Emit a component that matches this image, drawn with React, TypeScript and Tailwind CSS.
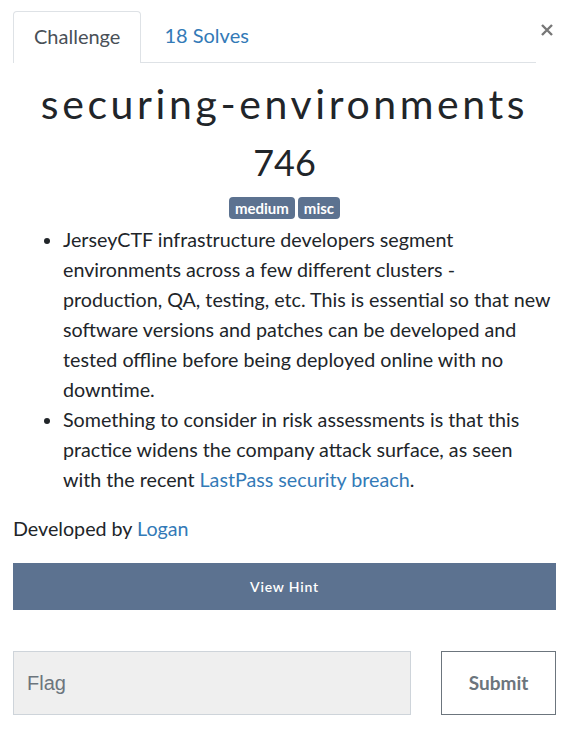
import React from "react";

export default function App() {
  return (
    <div className="w-[581px] min-h-[737px] bg-white font-['Lato',sans-serif] text-[#212529] px-[13px] pt-[11px]">
      <div className="w-[543px] flex items-start">
        <div className="flex flex-1 border-b border-[#dee2e6] h-[52px]">
          <div className="h-[52px] px-[20px] pb-[3px] flex items-center border border-b-0 border-[#dee2e6] rounded-t-[4px] bg-white text-[20px] text-[#495057] -mb-px">
            Challenge
          </div>
          <div className="h-[51px] px-[23px] pb-[3px] flex items-center text-[20px] text-[#337ab7]">
            18 Solves
          </div>
        </div>
        <button className="ml-[2px] mt-[10px] w-[18px] h-[18px] flex items-center justify-center text-[#777]">
          <svg width="14" height="14" viewBox="0 0 14 14">
            <path d="M2 2L12 12M12 2L2 12" stroke="currentColor" strokeWidth="2.4" />
          </svg>
        </button>
      </div>

      <div className="w-[543px]">
        <h2 className="mt-[17px] text-center text-[41px] leading-[48px] tracking-[3.6px] text-[#212529]">
          securing-environments
        </h2>
        <h3 className="mt-[14px] text-center text-[36px] leading-[40px] font-normal">746</h3>
        <div className="mt-[15px] flex justify-center gap-[3px]">
          <span className="px-[6px] h-[22px] flex items-center rounded-[4px] bg-[#5c7290] text-white text-[15px] font-bold">
            medium
          </span>
          <span className="px-[6px] h-[22px] flex items-center rounded-[4px] bg-[#5c7290] text-white text-[15px] font-bold">
            misc
          </span>
        </div>

        <ul className="mt-[6px] list-disc pl-[50px] pr-[4px] text-[19.7px] leading-[30px]">
          <li>
            JerseyCTF infrastructure developers segment environments across a few different clusters - production,
            QA, testing, etc. This is essential so that new software versions and patches can be developed and
            tested offline before being deployed online with no downtime.
          </li>
          <li>
            Something to consider in risk assessments is that this practice widens the company attack surface, as
            seen with the recent <a className="text-[#337ab7]">LastPass security breach</a>.
          </li>
        </ul>

        <p className="mt-[19px] text-[19.7px] leading-[30px]">
          Developed by <a className="text-[#337ab7]">Logan</a>
        </p>

        <button className="mt-[19px] w-full h-[47px] bg-[#5c7290] text-white text-[14px] tracking-[0.8px] font-semibold">
          View Hint
        </button>

        <div className="mt-[41px] flex items-center gap-[30px]">
          <div className="w-[398px] h-[64px] bg-[#efefef] border border-[#ced4da] flex items-center px-[13px] text-[20px] text-[#6c757d] font-['Liberation_Sans',sans-serif]">
            Flag
          </div>
          <button className="w-[115px] h-[64px] border border-[#6c757d] text-[19px] font-bold text-[#6c757d]">
            Submit
          </button>
        </div>
      </div>
    </div>
  );
}
